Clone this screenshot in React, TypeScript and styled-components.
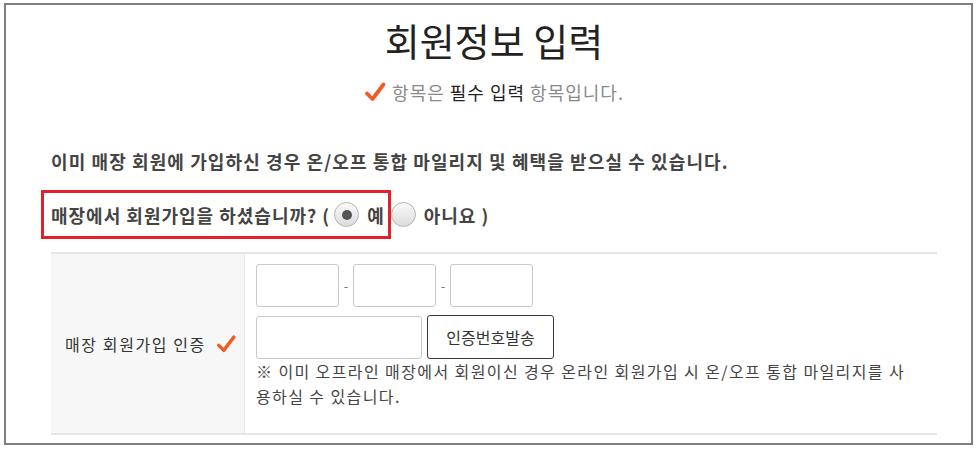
import styled, { createGlobalStyle } from 'styled-components';

const GlobalStyle = createGlobalStyle`
  body {
    margin: 0;
    padding: 0;
    background: #fff;
    font-family: 'Noto Sans CJK KR', 'Noto Sans', sans-serif;
  }
`;

const Frame = styled.div`
  box-sizing: border-box;
  width: 969px;
  height: 442px;
  margin: 3px 0 0 4px;
  border: 2px solid #7f7f7f;
  padding: 10px 34px 0 45px;
  overflow: hidden;
`;

const Title = styled.h1`
  margin: 0;
  font-size: 38px;
  font-weight: 400;
  line-height: 50px;
  color: #222;
  text-align: center;
`;

const Notice = styled.p`
  margin: 15px 0 0;
  display: flex;
  justify-content: center;
  align-items: center;
  gap: 6px;
  font-size: 18px;
  letter-spacing: 1px;
  line-height: 24px;
  color: #8a8a8a;
`;

const Strong = styled.span`
  color: #222;
`;

const Intro = styled.p`
  margin: 45px 0 0;
  font-size: 18px;
  font-weight: 700;
  letter-spacing: 1.1px;
  line-height: 24px;
  color: #444;
`;

const QuestionRow = styled.div`
  margin-top: 17px;
  display: flex;
  align-items: center;
  font-size: 18px;
  font-weight: 700;
  letter-spacing: 1px;
  color: #444;
`;

const Highlight = styled.div`
  box-sizing: border-box;
  height: 49px;
  margin-left: -10px;
  padding: 0 3px 0 7px;
  display: flex;
  align-items: center;
  border: 3px solid #e3212b;
`;

const Radio = styled.span<{ $checked?: boolean }>`
  box-sizing: border-box;
  width: 25px;
  height: 25px;
  margin-left: ${(p) => (p.$checked ? '4px' : '0')};
  display: inline-flex;
  align-items: center;
  justify-content: center;
  border-radius: 50%;
  border: 1px solid #b4b4b4;
  background: linear-gradient(#fafafa, #dcdcdc);
  &::after {
    content: '';
    display: ${(p) => (p.$checked ? 'block' : 'none')};
    width: 10px;
    height: 10px;
    border-radius: 50%;
    background: #555;
  }
`;

const RadioText = styled.span`
  margin-left: 8px;
`;

const Table = styled.div`
  margin-top: 13px;
  display: grid;
  grid-template-columns: 194px 1fr;
  border-top: 2px solid #e6e6e6;
  border-bottom: 2px solid #e6e6e6;
`;

const LabelCell = styled.div`
  display: flex;
  align-items: center;
  gap: 10px;
  padding-left: 14px;
  background: #f7f7f7;
  border-right: 1px solid #e8e8e8;
  font-size: 16px;
  letter-spacing: 1.6px;
  color: #333;
`;

const ValueCell = styled.div`
  padding: 10px 0 24px 11px;
`;

const FieldRow = styled.div`
  display: flex;
  align-items: center;
  & + & {
    margin-top: 8px;
  }
`;

const TextBox = styled.input<{ $wide?: boolean }>`
  box-sizing: border-box;
  width: ${(p) => (p.$wide ? '166px' : '83px')};
  height: 43px;
  margin: 0;
  padding: 0 6px;
  border: 1px solid #c9c9c9;
  border-radius: 3px;
  background: #fff;
  outline: none;
`;

const Dash = styled.span`
  width: 14px;
  text-align: center;
  font-size: 13px;
  color: #777;
`;

const SendButton = styled.button`
  box-sizing: border-box;
  width: 127px;
  height: 44px;
  margin-left: 5px;
  border: 1px solid #3a3a3a;
  border-radius: 3px;
  background: #fff;
  font-family: inherit;
  font-size: 16px;
  color: #333;
`;

const Note = styled.p`
  margin: 0;
  width: 658px;
  font-size: 16px;
  letter-spacing: 1.4px;
  line-height: 25px;
  color: #444;
  word-break: break-all;
`;

function Check({ size = 22 }: { size?: number }) {
  return (
    <svg width={size} height={size} viewBox="0 0 22 22">
      <path
        d="M3 12.5 L8.5 18 L19.5 3.5"
        fill="none"
        stroke="#f15a22"
        strokeWidth="3.8"
        strokeLinecap="round"
        strokeLinejoin="round"
      />
    </svg>
  );
}

export default function App() {
  return (
    <>
      <GlobalStyle />
      <Frame>
        <Title>회원정보 입력</Title>
        <Notice>
          <Check />
          <span>
            항목은 <Strong>필수 입력</Strong> 항목입니다.
          </span>
        </Notice>

        <Intro>이미 매장 회원에 가입하신 경우 온/오프 통합 마일리지 및 혜택을 받으실 수 있습니다.</Intro>

        <QuestionRow>
          <Highlight>
            매장에서 회원가입을 하셨습니까? (
            <Radio $checked />
            <RadioText>예</RadioText>
          </Highlight>
          <Radio />
          <RadioText>아니요 )</RadioText>
        </QuestionRow>

        <Table>
          <LabelCell>
            매장 회원가입 인증
            <Check size={20} />
          </LabelCell>
          <ValueCell>
            <FieldRow>
              <TextBox />
              <Dash>-</Dash>
              <TextBox />
              <Dash>-</Dash>
              <TextBox />
            </FieldRow>
            <FieldRow>
              <TextBox $wide />
              <SendButton>인증번호발송</SendButton>
            </FieldRow>
            <Note>
              ※ 이미 오프라인 매장에서 회원이신 경우 온라인 회원가입 시 온/오프 통합 마일리지를 사용하실 수 있습니다.
            </Note>
          </ValueCell>
        </Table>
      </Frame>
    </>
  );
}
